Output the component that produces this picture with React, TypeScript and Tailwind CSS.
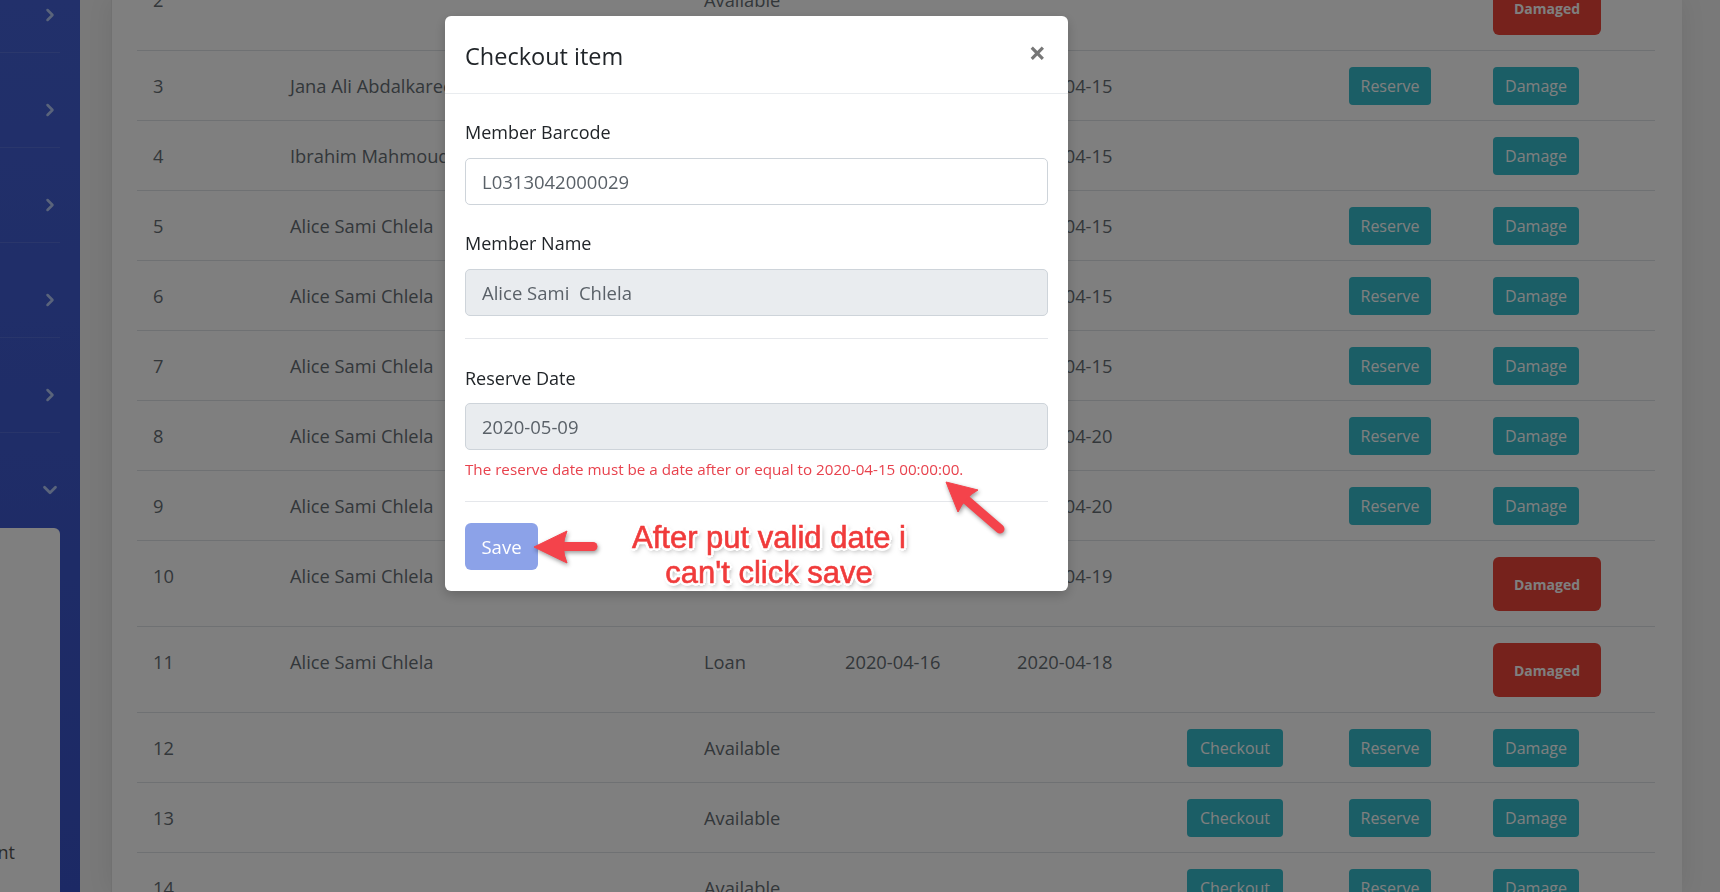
import { ChevronRight, ChevronDown } from 'lucide-react';

type Row = {
  n: number;
  name?: string;
  status?: string;
  d1?: string;
  d2?: string;
  checkout?: boolean;
  reserve?: boolean;
  damage?: boolean;
  damaged?: boolean;
};

const rows: Row[] = [
  { n: 2, status: 'Available', damaged: true },
  { n: 3, name: 'Jana Ali Abdalkareem', status: 'Loan', d1: '2020-04-13', d2: '2020-04-15', reserve: true, damage: true },
  { n: 4, name: 'Ibrahim Mahmoud', status: 'Loan', d1: '2020-04-13', d2: '2020-04-15', damage: true },
  { n: 5, name: 'Alice Sami Chlela', status: 'Loan', d1: '2020-04-13', d2: '2020-04-15', reserve: true, damage: true },
  { n: 6, name: 'Alice Sami Chlela', status: 'Loan', d1: '2020-04-13', d2: '2020-04-15', reserve: true, damage: true },
  { n: 7, name: 'Alice Sami Chlela', status: 'Loan', d1: '2020-04-13', d2: '2020-04-15', reserve: true, damage: true },
  { n: 8, name: 'Alice Sami Chlela', status: 'Loan', d1: '2020-04-18', d2: '2020-04-20', reserve: true, damage: true },
  { n: 9, name: 'Alice Sami Chlela', status: 'Loan', d1: '2020-04-18', d2: '2020-04-20', reserve: true, damage: true },
  { n: 10, name: 'Alice Sami Chlela', status: 'Loan', d1: '2020-04-17', d2: '2020-04-19', damaged: true },
  { n: 11, name: 'Alice Sami Chlela', status: 'Loan', d1: '2020-04-16', d2: '2020-04-18', damaged: true },
  { n: 12, status: 'Available', checkout: true, reserve: true, damage: true },
  { n: 13, status: 'Available', checkout: true, reserve: true, damage: true },
  { n: 14, status: 'Available', checkout: true, reserve: true, damage: true },
];

function TealButton({ label, width }: { label: string; width: string }) {
  return (
    <button className={`${width} h-[38px] rounded-[4px] bg-[#36bccc] text-white text-[16px] leading-none`}>
      {label}
    </button>
  );
}

function TableRow({ row }: { row: Row }) {
  const text = 'pl-[16px] leading-[38px] whitespace-nowrap overflow-hidden';
  return (
    <div className="grid grid-cols-[137px_414px_141px_172px_170px_162px_144px_1fr] items-start pt-[16px] pb-[15px] border-b border-[#dee2e6] text-[18.3px] text-[#666e75]">
      <div className={text}>{row.n}</div>
      <div className={text}>{row.name}</div>
      <div className={text}>{row.status}</div>
      <div className={text}>{row.d1}</div>
      <div className={text}>{row.d2}</div>
      <div className="pl-[16px]">{row.checkout && <TealButton label="Checkout" width="w-[96px]" />}</div>
      <div className="pl-[16px]">{row.reserve && <TealButton label="Reserve" width="w-[82px]" />}</div>
      <div className="pl-[16px]">
        {row.damage && <TealButton label="Damage" width="w-[86px]" />}
        {row.damaged && (
          <button className="w-[108px] h-[54px] rounded-[6px] bg-[#ec4438] text-white text-[14px] font-bold">Damaged</button>
        )}
      </div>
    </div>
  );
}

function Sidebar() {
  return (
    <aside className="w-[80px] h-[892px] shrink-0 overflow-hidden bg-gradient-to-b from-[#4461d6] to-[#3953ca]">
      <div className="-mt-[42px] flex flex-col h-[934px]">
        {[0, 1, 2, 3, 4].map((i) => (
          <div key={i} className="w-[60px] h-[95px] shrink-0 border-b border-white/10 pl-[40px] pt-[47px]">
            <ChevronRight size={20} strokeWidth={3} className="text-[#b4c8f6]" />
          </div>
        ))}
        <div className="w-[60px] h-[95px] shrink-0 pl-[39px] pt-[46px]">
          <ChevronDown size={22} strokeWidth={3} className="text-[#b4c8f6]" />
        </div>
        <div className="flex-1 w-[60px] bg-white rounded-tr-[6px] flex flex-col justify-end pb-[25px]">
          <div className="w-[15px] overflow-hidden flex justify-end">
            <span className="whitespace-nowrap text-[18px] leading-[30px] text-[#555]">Management</span>
          </div>
        </div>
      </div>
    </aside>
  );
}

function Modal() {
  return (
    <div className="fixed left-[445px] top-[16px] w-[623px] z-20 bg-white rounded-[6px] shadow-[0_4px_12px_rgba(0,0,0,0.2)]">
      <div className="h-[78px] px-[20px] pr-[24px] flex items-center justify-between border-b border-[#e9ecef]">
        <h5 className="text-[23.5px] leading-[36px] text-[#212529] mt-[2px]">Checkout item</h5>
        <span className="text-[30px] font-bold leading-none text-[#777] -mt-[3px] -mr-[2px]">×</span>
      </div>
      <div className="px-[20px] pt-[23px] pb-[21px]">
        <label className="block text-[18px] leading-[30px] text-[#212529] mb-[11px]">Member Barcode</label>
        <div className="h-[47px] border border-[#ced4da] rounded-[5px] px-[16px] flex items-center text-[18.5px] text-[#5a6168]">
          L0313042000029
        </div>
        <label className="block text-[18px] leading-[30px] text-[#212529] mt-[23px] mb-[11px]">Member Name</label>
        <div className="h-[47px] border border-[#ced4da] bg-[#e9ecef] rounded-[5px] px-[16px] flex items-center text-[18.5px] text-[#5a6168] whitespace-pre">
          Alice Sami  Chlela
        </div>
        <hr className="mt-[22px] border-[#e5e7eb]" />
        <label className="block text-[18px] leading-[30px] text-[#212529] mt-[24px] mb-[10px]">Reserve Date</label>
        <div className="h-[47px] border border-[#ced4da] bg-[#e9ecef] rounded-[5px] px-[16px] flex items-center text-[18.5px] text-[#5a6168]">
          2020-05-09
        </div>
        <p className="mt-[7px] text-[15.2px] leading-[24px] text-[#e8424d]">
          The reserve date must be a date after or equal to 2020-04-15 00:00:00.
        </p>
        <hr className="mt-[20px] border-[#e5e7eb]" />
        <button className="mt-[21px] w-[73px] h-[47px] rounded-[6px] bg-[#8ca2e8] text-white text-[18.5px] font-medium">Save</button>
      </div>
    </div>
  );
}

function Annotation() {
  return (
    <>
      <div className="fixed left-[619px] top-[520px] w-[300px] z-30 text-center font-['Liberation_Sans',Arial,sans-serif] text-[31px] leading-[35px] text-[#f03b3b] [-webkit-text-stroke:0.6px_#f03b3b] [text-shadow:-2px_-2px_0_#fff,2px_-2px_0_#fff,-2px_2px_0_#fff,2px_2px_0_#fff,0_-3px_0_#fff,0_3px_0_#fff,-3px_0_0_#fff,3px_0_0_#fff,2px_3px_5px_rgba(0,0,0,0.5)]">
        After put valid date i
        <br />
        can't click save
      </div>
      <svg className="fixed left-0 top-0 z-30 pointer-events-none" width="1720" height="892">
        <g fill="#f4434b" stroke="#f4434b" style={{ filter: 'drop-shadow(1px 2px 2px rgba(0,0,0,0.4))' }}>
          <line x1="593" y1="546.5" x2="556" y2="546.5" strokeWidth="9" strokeLinecap="round" />
          <path d="M534 547 L567 531 Q560 547 567 563 Z" strokeWidth="1" strokeLinejoin="round" />
          <line x1="1000" y1="529" x2="963" y2="497" strokeWidth="9" strokeLinecap="round" />
          <path d="M946 482 L978 490 Q965 497 958 512 Z" strokeWidth="1" strokeLinejoin="round" />
        </g>
      </svg>
    </>
  );
}

export default function App() {
  return (
    <div className="h-[892px] w-[1720px] overflow-hidden flex font-['Open_Sans',sans-serif]">
      <Sidebar />
      <main className="flex-1 bg-[#f2f2f2] pl-[31px] pr-[38px] overflow-hidden">
        <div className="h-full bg-white border-l border-[#e2e2e2] shadow-[0_0_24px_rgba(0,0,0,0.08)] pl-[25px] pr-[27px] overflow-hidden">
          <div className="-mt-[35px]">
            {rows.map((r) => (
              <TableRow key={r.n} row={r} />
            ))}
          </div>
        </div>
      </main>
      <div className="fixed inset-0 z-10 bg-black/50" />
      <Modal />
      <Annotation />
    </div>
  );
}
